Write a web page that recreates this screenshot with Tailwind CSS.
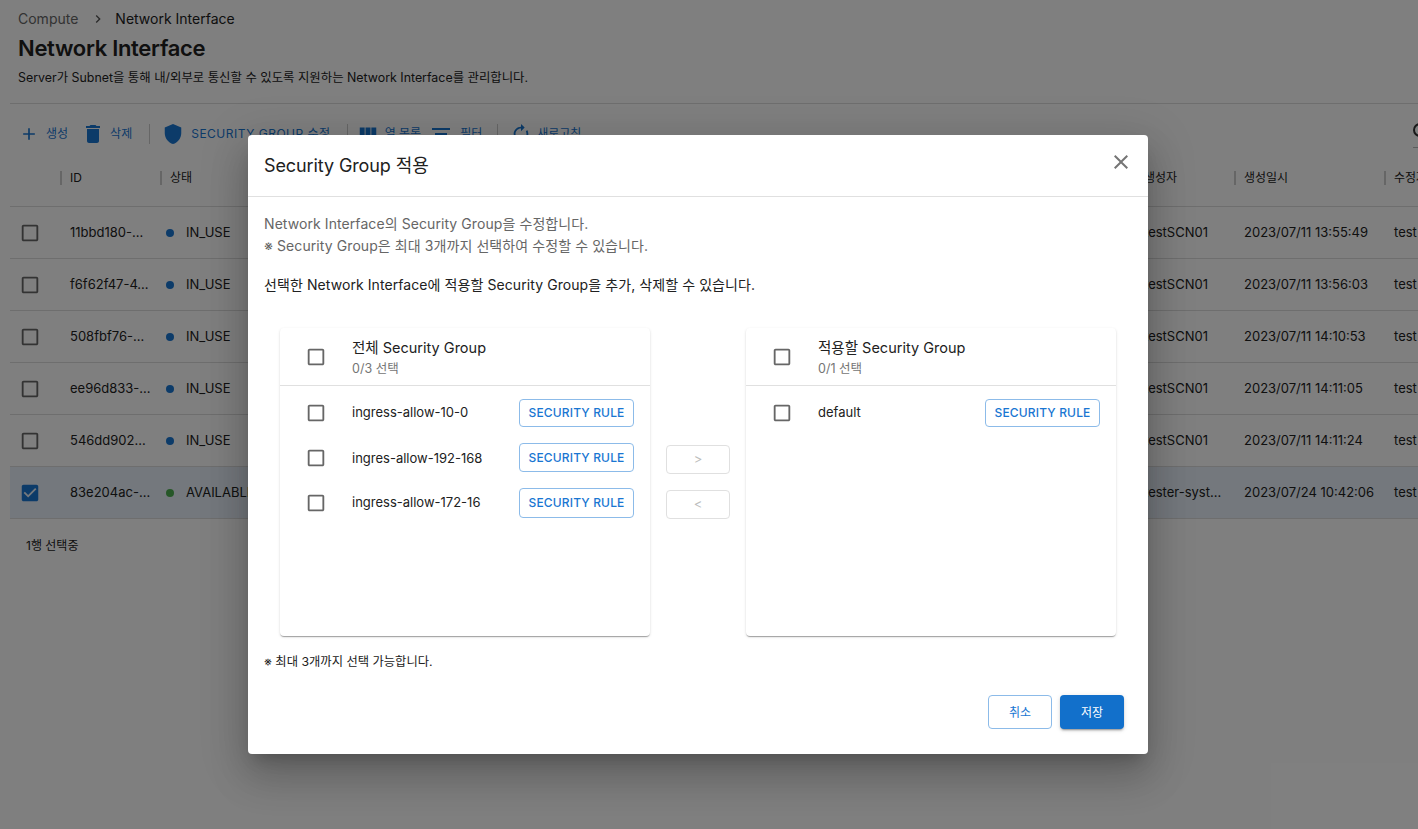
<!DOCTYPE html>
<html lang="ko">
<head>
  <meta charset="UTF-8" />
  <meta name="viewport" content="width=device-width, initial-scale=1.0"/>
  <title>Network Interface</title>
  <script src="https://cdn.jsdelivr.net/npm/@tailwindcss/browser@4"></script>
</head>
<body class="bg-white h-[829px] overflow-hidden relative font-['Inter','Noto_Sans_CJK_KR',sans-serif] text-[#212121]">

  <!-- page behind the dialog -->
  <div class="h-[829px] overflow-hidden">
    <div class="px-[18px] pt-[10px] h-[103px]">
      <div class="flex items-center text-[14px] leading-[18px] h-[18px]">
        <span class="text-[#666]">Compute</span>
        <svg class="w-[16px] h-[16px] ml-[12px] text-[#555]" viewBox="0 0 24 24" fill="currentColor"><path d="M10 6 8.59 7.41 13.17 12l-4.58 4.59L10 18l6-6z"/></svg>
        <span class="ml-[9px]">Network Interface</span>
      </div>
      <h1 class="text-[22px] leading-[28px] font-semibold tracking-[-0.3px] mt-[6px]">Network Interface</h1>
      <p class="text-[12.4px] leading-[18px] mt-[7px]">Server가 Subnet을 통해 내/외부로 통신할 수 있도록 지원하는 Network Interface를 관리합니다.</p>
    </div>

    <div class="ml-[10px] border-t border-[#ddd]">
      <div class="flex items-center h-[58px] pt-[1px] text-[#1976d2] whitespace-nowrap">
        <svg class="w-[20px] h-[20px] ml-[9px]" viewBox="0 0 24 24" fill="currentColor"><path d="M19 13h-6v6h-2v-6H5v-2h6V5h2v6h6v2z"/></svg>
        <span class="ml-[7px] text-[12px]">생성</span>
        <svg class="w-[24px] h-[24px] ml-[13px]" viewBox="0 0 24 24" fill="currentColor"><path d="M6 19c0 1.1.9 2 2 2h8c1.1 0 2-.9 2-2V7H6v12zM19 4h-3.5l-1-1h-5l-1 1H5v2h14V4z"/></svg>
        <span class="ml-[5px] text-[12px]">삭제</span>
        <span class="w-px h-[20px] bg-[#ccc] ml-[17px]"></span>
        <svg class="w-[22px] h-[22px] ml-[12px]" viewBox="0 0 24 24" fill="currentColor"><path d="M12 1 3 5v6c0 5.55 3.84 10.74 9 12 5.16-1.26 9-6.45 9-12V5l-9-4z"/></svg>
        <span class="ml-[7px] text-[12px] tracking-[0.5px]">SECURITY GROUP 수정</span>
        <span class="w-px h-[20px] bg-[#ccc] ml-[16px]"></span>
        <svg class="w-[22px] h-[22px] ml-[9px]" viewBox="0 0 24 24" fill="currentColor"><path d="M14.67 5v14H9.33V5h5.34zm1 14H21V5h-5.33v14zm-7.34 0V5H3v14h5.33z"/></svg>
        <span class="ml-[6px] text-[12px]">열 목록</span>
        <svg class="w-[24px] h-[24px] ml-[8px]" viewBox="0 0 24 24" fill="currentColor"><path d="M10 18h4v-2h-4v2zM3 6v2h18V6H3zm3 7h12v-2H6v2z"/></svg>
        <span class="ml-[7px] text-[12px]">필터</span>
        <span class="w-px h-[20px] bg-[#ccc] ml-[15px]"></span>
        <svg class="w-[22px] h-[22px] ml-[12px]" viewBox="0 0 24 24" fill="currentColor"><path d="M12 6v3l4-4-4-4v3c-4.42 0-8 3.58-8 8 0 1.57.46 3.03 1.24 4.26L6.7 14.8c-.45-.83-.7-1.79-.7-2.8 0-3.31 2.69-6 6-6zm6.76 1.74L17.3 9.2c.44.84.7 1.79.7 2.8 0 3.31-2.69 6-6 6v-3l-4 4 4 4v-3c4.42 0 8-3.58 8-8 0-1.57-.46-3.03-1.24-4.26z"/></svg>
        <span class="ml-[5px] text-[12px]">새로고침</span>
        <div class="ml-auto w-[5px] h-[28px] border-b border-[#bbb] overflow-hidden">
          <span class="block w-[14px] h-[14px] rounded-full border-2 border-[#333] mt-[3px]"></span>
        </div>
      </div>

      <!-- table -->
      <div class="text-[13px] w-[1420px]">
        <div class="grid grid-cols-[50px_100px_100px_874px_100px_150px_45px] h-[45px] pb-[12px] items-center border-b border-[#ddd]">
          <div></div>
          <div class="border-l-2 border-[#ccc] pl-[8px] leading-[14px] text-[12px]">ID</div>
          <div class="border-l-2 border-[#ccc] pl-[8px] leading-[14px] text-[12px]">상태</div>
          <div></div>
          <div class="border-l-2 border-[#ccc] pl-[8px] leading-[14px] text-[12px]">생성자</div>
          <div class="border-l-2 border-[#ccc] pl-[8px] leading-[14px] text-[12px]">생성일시</div>
          <div class="border-l-2 border-[#ccc] pl-[8px] leading-[14px] text-[12px] whitespace-nowrap overflow-hidden">수정자</div>
        </div>

        <div class="grid grid-cols-[50px_100px_100px_874px_100px_150px_45px] h-[52px] items-center border-b border-[#ddd]">
          <svg class="w-[22px] h-[22px] ml-[9px] text-[#666]" viewBox="0 0 24 24" fill="currentColor"><path d="M19 5v14H5V5h14m0-2H5c-1.1 0-2 .9-2 2v14c0 1.1.9 2 2 2h14c1.1 0 2-.9 2-2V5c0-1.1-.9-2-2-2z"/></svg>
          <div class="pl-[10px]">11bbd180-...</div>
          <div class="pl-[6px] flex items-center gap-[12px]"><span class="w-[8px] h-[8px] rounded-full bg-[#1976d2]"></span>IN_USE</div>
          <div></div><div class="pl-[10px]">testSCN01</div><div class="pl-[10px]">2023/07/11 13:55:49</div><div class="pl-[10px]">test</div>
        </div>
        <div class="grid grid-cols-[50px_100px_100px_874px_100px_150px_45px] h-[52px] items-center border-b border-[#ddd]">
          <svg class="w-[22px] h-[22px] ml-[9px] text-[#666]" viewBox="0 0 24 24" fill="currentColor"><path d="M19 5v14H5V5h14m0-2H5c-1.1 0-2 .9-2 2v14c0 1.1.9 2 2 2h14c1.1 0 2-.9 2-2V5c0-1.1-.9-2-2-2z"/></svg>
          <div class="pl-[10px]">f6f62f47-4...</div>
          <div class="pl-[6px] flex items-center gap-[12px]"><span class="w-[8px] h-[8px] rounded-full bg-[#1976d2]"></span>IN_USE</div>
          <div></div><div class="pl-[10px]">testSCN01</div><div class="pl-[10px]">2023/07/11 13:56:03</div><div class="pl-[10px]">test</div>
        </div>
        <div class="grid grid-cols-[50px_100px_100px_874px_100px_150px_45px] h-[52px] items-center border-b border-[#ddd]">
          <svg class="w-[22px] h-[22px] ml-[9px] text-[#666]" viewBox="0 0 24 24" fill="currentColor"><path d="M19 5v14H5V5h14m0-2H5c-1.1 0-2 .9-2 2v14c0 1.1.9 2 2 2h14c1.1 0 2-.9 2-2V5c0-1.1-.9-2-2-2z"/></svg>
          <div class="pl-[10px]">508fbf76-...</div>
          <div class="pl-[6px] flex items-center gap-[12px]"><span class="w-[8px] h-[8px] rounded-full bg-[#1976d2]"></span>IN_USE</div>
          <div></div><div class="pl-[10px]">testSCN01</div><div class="pl-[10px]">2023/07/11 14:10:53</div><div class="pl-[10px]">test</div>
        </div>
        <div class="grid grid-cols-[50px_100px_100px_874px_100px_150px_45px] h-[52px] items-center border-b border-[#ddd]">
          <svg class="w-[22px] h-[22px] ml-[9px] text-[#666]" viewBox="0 0 24 24" fill="currentColor"><path d="M19 5v14H5V5h14m0-2H5c-1.1 0-2 .9-2 2v14c0 1.1.9 2 2 2h14c1.1 0 2-.9 2-2V5c0-1.1-.9-2-2-2z"/></svg>
          <div class="pl-[10px]">ee96d833-...</div>
          <div class="pl-[6px] flex items-center gap-[12px]"><span class="w-[8px] h-[8px] rounded-full bg-[#1976d2]"></span>IN_USE</div>
          <div></div><div class="pl-[10px]">testSCN01</div><div class="pl-[10px]">2023/07/11 14:11:05</div><div class="pl-[10px]">test</div>
        </div>
        <div class="grid grid-cols-[50px_100px_100px_874px_100px_150px_45px] h-[52px] items-center border-b border-[#ddd]">
          <svg class="w-[22px] h-[22px] ml-[9px] text-[#666]" viewBox="0 0 24 24" fill="currentColor"><path d="M19 5v14H5V5h14m0-2H5c-1.1 0-2 .9-2 2v14c0 1.1.9 2 2 2h14c1.1 0 2-.9 2-2V5c0-1.1-.9-2-2-2z"/></svg>
          <div class="pl-[10px]">546dd902...</div>
          <div class="pl-[6px] flex items-center gap-[12px]"><span class="w-[8px] h-[8px] rounded-full bg-[#1976d2]"></span>IN_USE</div>
          <div></div><div class="pl-[10px]">testSCN01</div><div class="pl-[10px]">2023/07/11 14:11:24</div><div class="pl-[10px]">test</div>
        </div>
        <div class="grid grid-cols-[50px_100px_100px_874px_100px_150px_45px] h-[52px] items-center border-b border-[#ddd] bg-[#e8f1fa]">
          <svg class="w-[22px] h-[22px] ml-[9px] text-[#1976d2]" viewBox="0 0 24 24" fill="currentColor"><path d="M19 3H5c-1.11 0-2 .9-2 2v14c0 1.1.89 2 2 2h14c1.11 0 2-.9 2-2V5c0-1.1-.89-2-2-2zm-9 14l-5-5 1.41-1.41L10 14.17l7.59-7.59L19 8l-9 9z"/></svg>
          <div class="pl-[10px]">83e204ac-...</div>
          <div class="pl-[6px] flex items-center gap-[12px]"><span class="w-[8px] h-[8px] rounded-full bg-[#4caf50]"></span>AVAILABLE</div>
          <div></div><div class="pl-[10px] whitespace-nowrap">tester-syst...</div><div class="pl-[10px]">2023/07/24 10:42:06</div><div class="pl-[10px]">test</div>
        </div>
        <div class="pl-[16px] pt-[18px] text-[12px] leading-[18px]">1행 선택중</div>
      </div>
    </div>
  </div>

  <!-- modal backdrop + dialog -->
  <div class="absolute inset-0 bg-black/50"></div>
  <div class="absolute left-[248px] top-[135px] w-[900px] h-[619px] bg-white rounded-[4px] shadow-[0_11px_15px_-7px_rgba(0,0,0,0.2),0_24px_38px_3px_rgba(0,0,0,0.14),0_9px_46px_8px_rgba(0,0,0,0.12)]">
    <div class="h-[62px] border-b border-[#e0e0e0] flex items-center justify-between pl-[16px] pr-[15px]">
      <h2 class="text-[18px] leading-[24px] tracking-[-0.1px] pt-[1px]">Security Group 적용</h2>
      <svg class="w-[24px] h-[24px] text-[#757575] mb-[7px]" viewBox="0 0 24 24" fill="currentColor"><path d="M19 6.41 17.59 5 12 10.59 6.41 5 5 6.41 10.59 12 5 17.59 6.41 19 12 13.41 17.59 19 19 17.59 13.41 12z"/></svg>
    </div>

    <div class="px-[16px] pt-[16px]">
      <p class="text-[14px] leading-[22px] tracking-[0.08px] text-[#666]">Network Interface의 Security Group을 수정합니다.<br>※ Security Group은 최대 3개까지 선택하여 수정할 수 있습니다.</p>
      <p class="text-[14px] leading-[22px] tracking-[0.08px] mt-[17px]">선택한 Network Interface에 적용할 Security Group을 추가, 삭제할 수 있습니다.</p>

      <div class="flex items-center justify-between mx-[16px] mt-[32px]">
        <!-- left list -->
        <div class="w-[370px] h-[308px] rounded-[4px] bg-white shadow-[0_2px_1px_-1px_rgba(0,0,0,0.2),0_1px_1px_0_rgba(0,0,0,0.14),0_1px_3px_0_rgba(0,0,0,0.12)]">
          <div class="h-[58px] border-b border-[#e0e0e0] flex items-center pl-[25px]">
            <svg class="w-[22px] h-[22px] text-[#666]" viewBox="0 0 24 24" fill="currentColor"><path d="M19 5v14H5V5h14m0-2H5c-1.1 0-2 .9-2 2v14c0 1.1.9 2 2 2h14c1.1 0 2-.9 2-2V5c0-1.1-.9-2-2-2z"/></svg>
            <div class="ml-[25px] pt-[2px]">
              <div class="text-[14.5px] leading-[20px]">전체 Security Group</div>
              <div class="text-[12.5px] leading-[16px] text-[#757575] mt-[3px]">0/3 선택</div>
            </div>
          </div>
          <div class="pt-[13px] pl-[25px] pr-[16px] text-[13px]">
            <div class="flex items-center h-[28px]">
              <svg class="w-[22px] h-[22px] text-[#666]" viewBox="0 0 24 24" fill="currentColor"><path d="M19 5v14H5V5h14m0-2H5c-1.1 0-2 .9-2 2v14c0 1.1.9 2 2 2h14c1.1 0 2-.9 2-2V5c0-1.1-.9-2-2-2z"/></svg>
              <span class="ml-[25px]">ingress-allow-10-0</span>
              <button class="ml-auto w-[115px] h-[28px] border border-[#8cbbe9] rounded-[4px] text-[12px] font-medium tracking-[0.15px] text-[#1976d2]">SECURITY RULE</button>
            </div>
            <div class="flex items-center h-[29px] mt-[16px]">
              <svg class="w-[22px] h-[22px] text-[#666]" viewBox="0 0 24 24" fill="currentColor"><path d="M19 5v14H5V5h14m0-2H5c-1.1 0-2 .9-2 2v14c0 1.1.9 2 2 2h14c1.1 0 2-.9 2-2V5c0-1.1-.9-2-2-2z"/></svg>
              <span class="ml-[25px] pt-[2px]">ingres-allow-192-168</span>
              <button class="ml-auto w-[115px] h-[29px] border border-[#8cbbe9] rounded-[4px] text-[12px] font-medium tracking-[0.15px] text-[#1976d2]">SECURITY RULE</button>
            </div>
            <div class="flex items-center h-[30px] mt-[16px]">
              <svg class="w-[22px] h-[22px] text-[#666]" viewBox="0 0 24 24" fill="currentColor"><path d="M19 5v14H5V5h14m0-2H5c-1.1 0-2 .9-2 2v14c0 1.1.9 2 2 2h14c1.1 0 2-.9 2-2V5c0-1.1-.9-2-2-2z"/></svg>
              <span class="ml-[25px]">ingress-allow-172-16</span>
              <button class="ml-auto w-[115px] h-[30px] border border-[#8cbbe9] rounded-[4px] text-[12px] font-medium tracking-[0.15px] text-[#1976d2]">SECURITY RULE</button>
            </div>
          </div>
        </div>

        <!-- move buttons -->
        <div class="flex flex-col gap-[16px] text-[13px] text-[#bdbdbd]">
          <button class="w-[64px] h-[29px] border border-[#e0e0e0] rounded-[4px]">&gt;</button>
          <button class="w-[64px] h-[29px] border border-[#e0e0e0] rounded-[4px]">&lt;</button>
        </div>

        <!-- right list -->
        <div class="w-[370px] h-[308px] rounded-[4px] bg-white shadow-[0_2px_1px_-1px_rgba(0,0,0,0.2),0_1px_1px_0_rgba(0,0,0,0.14),0_1px_3px_0_rgba(0,0,0,0.12)]">
          <div class="h-[58px] border-b border-[#e0e0e0] flex items-center pl-[25px]">
            <svg class="w-[22px] h-[22px] text-[#666]" viewBox="0 0 24 24" fill="currentColor"><path d="M19 5v14H5V5h14m0-2H5c-1.1 0-2 .9-2 2v14c0 1.1.9 2 2 2h14c1.1 0 2-.9 2-2V5c0-1.1-.9-2-2-2z"/></svg>
            <div class="ml-[25px] pt-[2px]">
              <div class="text-[14.5px] leading-[20px]">적용할 Security Group</div>
              <div class="text-[12.5px] leading-[16px] text-[#757575] mt-[3px]">0/1 선택</div>
            </div>
          </div>
          <div class="pt-[13px] pl-[25px] pr-[16px] text-[13px]">
            <div class="flex items-center h-[28px]">
              <svg class="w-[22px] h-[22px] text-[#666]" viewBox="0 0 24 24" fill="currentColor"><path d="M19 5v14H5V5h14m0-2H5c-1.1 0-2 .9-2 2v14c0 1.1.9 2 2 2h14c1.1 0 2-.9 2-2V5c0-1.1-.9-2-2-2z"/></svg>
              <span class="ml-[25px]">default</span>
              <button class="ml-auto w-[115px] h-[28px] border border-[#8cbbe9] rounded-[4px] text-[12px] font-medium tracking-[0.15px] text-[#1976d2]">SECURITY RULE</button>
            </div>
          </div>
        </div>
      </div>

      <p class="text-[12.3px] leading-[16px] mt-[18px]">※ 최대 3개까지 선택 가능합니다.</p>

      <div class="flex justify-end gap-[8px] mt-[25px] pr-[8px] text-[12px]">
        <button class="w-[64px] h-[34px] pt-[1px] border border-[#8cbbe9] rounded-[4px] text-[#1976d2]">취소</button>
        <button class="w-[64px] h-[34px] pt-[1px] rounded-[4px] bg-[#1270cb] text-white shadow-[0_3px_1px_-2px_rgba(0,0,0,0.2),0_2px_2px_0_rgba(0,0,0,0.14),0_1px_5px_0_rgba(0,0,0,0.12)]">저장</button>
      </div>
    </div>
  </div>
</body>
</html>
